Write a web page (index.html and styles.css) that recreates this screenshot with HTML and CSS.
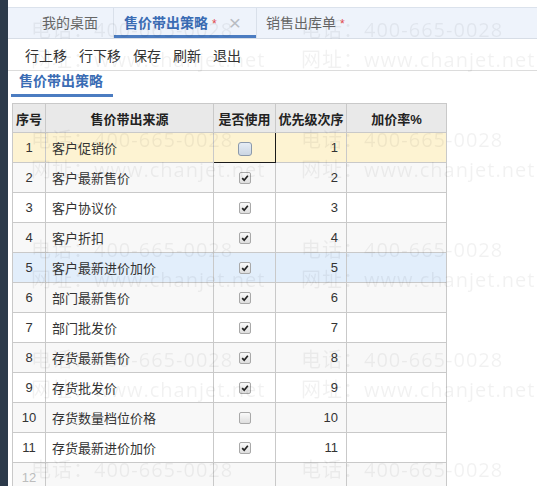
FILE: index.html
```html
<!DOCTYPE html>
<html lang="zh-CN">
<head>
<meta charset="utf-8">
<title>售价带出策略</title>
<link rel="stylesheet" href="styles.css">
</head>
<body>
<div class="app">
  <div class="sidebar"></div>
  <div class="main">
    <div class="tabbar">
      <div class="tab first">我的桌面</div>
      <div class="tab active">售价带出策略<span class="star">*</span><span class="close">×</span></div>
      <div class="tab">销售出库单<span class="star">*</span></div>
    </div>
    <div class="toolbar">
      <span class="tool">行上移</span>
      <span class="tool">行下移</span>
      <span class="tool">保存</span>
      <span class="tool">刷新</span>
      <span class="tool">退出</span>
    </div>
    <div class="section">
      <div class="section-tab">售价带出策略</div>
    </div>
    <table class="grid">
      <colgroup>
        <col class="c-no"><col class="c-src"><col class="c-use"><col class="c-pri"><col class="c-rate">
      </colgroup>
      <thead>
        <tr><th>序号</th><th>售价带出来源</th><th>是否使用</th><th>优先级次序</th><th>加价率%</th></tr>
      </thead>
      <tbody>
        <tr class="row-sel"><td class="no">1</td><td class="src">客户促销价</td><td class="use focus"><span class="cb cb-hover"></span></td><td class="pri">1</td><td></td></tr>
        <tr class="alt"><td class="no">2</td><td class="src">客户最新售价</td><td class="use"><span class="cb on"><svg viewBox="0 0 12 12"><path d="M2.6 6.2 L5 8.6 L9.4 3.2"/></svg></span></td><td class="pri">2</td><td></td></tr>
        <tr><td class="no">3</td><td class="src">客户协议价</td><td class="use"><span class="cb on"><svg viewBox="0 0 12 12"><path d="M2.6 6.2 L5 8.6 L9.4 3.2"/></svg></span></td><td class="pri">3</td><td></td></tr>
        <tr class="alt"><td class="no">4</td><td class="src">客户折扣</td><td class="use"><span class="cb on"><svg viewBox="0 0 12 12"><path d="M2.6 6.2 L5 8.6 L9.4 3.2"/></svg></span></td><td class="pri">4</td><td></td></tr>
        <tr class="row-hover"><td class="no">5</td><td class="src">客户最新进价加价</td><td class="use"><span class="cb on"><svg viewBox="0 0 12 12"><path d="M2.6 6.2 L5 8.6 L9.4 3.2"/></svg></span></td><td class="pri">5</td><td></td></tr>
        <tr class="alt"><td class="no">6</td><td class="src">部门最新售价</td><td class="use"><span class="cb on"><svg viewBox="0 0 12 12"><path d="M2.6 6.2 L5 8.6 L9.4 3.2"/></svg></span></td><td class="pri">6</td><td></td></tr>
        <tr><td class="no">7</td><td class="src">部门批发价</td><td class="use"><span class="cb on"><svg viewBox="0 0 12 12"><path d="M2.6 6.2 L5 8.6 L9.4 3.2"/></svg></span></td><td class="pri">7</td><td></td></tr>
        <tr class="alt"><td class="no">8</td><td class="src">存货最新售价</td><td class="use"><span class="cb on"><svg viewBox="0 0 12 12"><path d="M2.6 6.2 L5 8.6 L9.4 3.2"/></svg></span></td><td class="pri">8</td><td></td></tr>
        <tr><td class="no">9</td><td class="src">存货批发价</td><td class="use"><span class="cb on"><svg viewBox="0 0 12 12"><path d="M2.6 6.2 L5 8.6 L9.4 3.2"/></svg></span></td><td class="pri">9</td><td></td></tr>
        <tr class="alt"><td class="no">10</td><td class="src">存货数量档位价格</td><td class="use"><span class="cb"></span></td><td class="pri">10</td><td></td></tr>
        <tr><td class="no">11</td><td class="src">存货最新进价加价</td><td class="use"><span class="cb on"><svg viewBox="0 0 12 12"><path d="M2.6 6.2 L5 8.6 L9.4 3.2"/></svg></span></td><td class="pri">11</td><td></td></tr>
        <tr class="alt empty"><td class="no">12</td><td class="src"></td><td class="use"></td><td class="pri"></td><td></td></tr>
      </tbody>
    </table>
  </div>
</div>
<div class="watermark" aria-hidden="true">
  <span class="wm" style="left:31px;top:16px">电话：400-665-0028</span>
  <span class="wm" style="left:301px;top:16px">电话：400-665-0028</span>
  <span class="wm" style="left:31px;top:46px">网址：www.chanjet.net</span>
  <span class="wm" style="left:301px;top:46px">网址：www.chanjet.net</span>
  <span class="wm" style="left:31px;top:126px">电话：400-665-0028</span>
  <span class="wm" style="left:301px;top:126px">电话：400-665-0028</span>
  <span class="wm" style="left:31px;top:156px">网址：www.chanjet.net</span>
  <span class="wm" style="left:301px;top:156px">网址：www.chanjet.net</span>
  <span class="wm" style="left:31px;top:236px">电话：400-665-0028</span>
  <span class="wm" style="left:301px;top:236px">电话：400-665-0028</span>
  <span class="wm" style="left:31px;top:266px">网址：www.chanjet.net</span>
  <span class="wm" style="left:301px;top:266px">网址：www.chanjet.net</span>
  <span class="wm" style="left:31px;top:346px">电话：400-665-0028</span>
  <span class="wm" style="left:301px;top:346px">电话：400-665-0028</span>
  <span class="wm" style="left:31px;top:376px">网址：www.chanjet.net</span>
  <span class="wm" style="left:301px;top:376px">网址：www.chanjet.net</span>
  <span class="wm" style="left:31px;top:456px">电话：400-665-0028</span>
  <span class="wm" style="left:301px;top:456px">电话：400-665-0028</span>
</div>
</body>
</html>
```

FILE: styles.css
```css
* { box-sizing: border-box; }
html, body {
  margin: 0;
  padding: 0;
  width: 537px;
  height: 486px;
  overflow: hidden;
  background: #fff;
  font-family: "Liberation Sans", "Noto Sans CJK SC", sans-serif;
  color: #333;
}
.app {
  display: flex;
  height: 486px;
}
.sidebar {
  width: 8px;
  flex: none;
  background: #2c3a4a;
}
.main {
  flex: 1;
  padding-top: 7px;
  min-width: 0;
}

/* tabs */
.tabbar {
  display: flex;
  height: 32px;
  background: #eef3fb;
  border-top: 1px solid #dbe2ec;
  border-bottom: 1px solid #d7dde6;
  font-size: 14px;
}
.tab {
  display: flex;
  align-items: center;
  color: #666;
  padding: 0 10px 0 9px;
  border-left: 1px solid #d9e0ea;
  white-space: nowrap;
  line-height: 20px;
}
.tab.first {
  border-left: none;
  padding-left: 34px;
  width: 105px;
}
.tab.active {
  width: 143px;
  padding-left: 10px;
  color: #3a6cb4;
  font-weight: bold;
  box-shadow: inset 0 -3px 0 #4b7cc1;
}
.star {
  color: #e0474c;
  font-weight: normal;
  font-size: 12px;
  margin-left: 4px;
  align-self: flex-start;
  margin-top: 6px;
}
.close {
  color: #b8bcc2;
  font-weight: normal;
  font-size: 21px;
  margin-left: 12px;
}

/* toolbar */
.toolbar {
  display: flex;
  align-items: center;
  gap: 12px;
  height: 32px;
  padding-left: 17px;
  border-bottom: 1px solid #dcdcdc;
  font-size: 14px;
  color: #333;
}

/* section tab */
.section {
  padding-left: 3px;
}
.section-tab {
  width: 102px;
  padding: 0 0 3px 8px;
  line-height: 20px;
  font-size: 14px;
  font-weight: bold;
  color: #3a6cb4;
  border-bottom: 3px solid #4b7cc1;
}

/* grid */
.grid {
  margin: 6px 0 0 4px;
  border-collapse: collapse;
  table-layout: fixed;
  width: 434px;
  font-size: 13px;
}
.c-no { width: 33px; }
.c-src { width: 168px; }
.c-use { width: 62px; }
.c-pri { width: 71px; }
.c-rate { width: 100px; }
.grid th, .grid td {
  border: 1px solid #c9c9c9;
  padding: 0;
  vertical-align: middle;
  white-space: nowrap;
  overflow: hidden;
}
.grid th {
  height: 29px;
  background: #e9e9e9;
  color: #222;
  font-weight: bold;
  text-align: center;
}
.grid td {
  height: 30px;
  color: #333;
}
.grid tr.alt td { background: #f8f8f8; }
.grid tr.row-sel td { background: #fdf3d2; }
.grid tr.row-hover td { background: #e2eefb; }
.grid td.no { text-align: center; }
.grid td.src { padding-left: 6px; }
.grid td.use { text-align: center; }
.grid td.pri { text-align: right; padding-right: 8px; }
.grid td.focus { border: 1px solid #1a1a1a; }
.grid tr.empty td.no { color: #bdbdbd; }

.cb {
  display: inline-block;
  vertical-align: middle;
  width: 12px;
  height: 12px;
  border: 1px solid #a9a9a9;
  border-radius: 2px;
  background: linear-gradient(#fafafa, #dedede);
  position: relative;
  margin-top: -1px;
}
.cb svg {
  position: absolute;
  left: 0;
  top: 0;
  width: 10px;
  height: 10px;
  fill: none;
  stroke: #222;
  stroke-width: 2;
}
.cb.cb-hover {
  width: 14px;
  height: 14px;
  border-radius: 3px;
  border: 1px solid #8b99ab;
  background: linear-gradient(#e6edf5, #cbd6e3);
  margin-top: 1px;
}

/* watermark overlay */
.watermark {
  position: fixed;
  inset: 0;
  pointer-events: none;
  z-index: 5;
}
.wm {
  position: absolute;
  font-family: "Open Sans", "Noto Sans CJK SC", sans-serif;
  font-size: 20px;
  letter-spacing: 1px;
  line-height: 28px;
  white-space: nowrap;
  color: rgba(0, 0, 0, 0.055);
}
```
